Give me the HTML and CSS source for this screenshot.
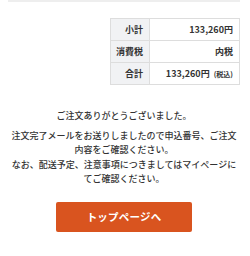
FILE: index.html
```html
<!DOCTYPE html>
<html lang="ja">
<head>
<meta charset="utf-8">
<link rel="stylesheet" href="styles.css">
</head>
<body>
<div class="wrap">
  <div class="bar"></div>
  <table class="totals">
    <colgroup><col class="c-label"><col class="c-value"></colgroup>
    <tr><th>小計</th><td>133,260円</td></tr>
    <tr><th>消費税</th><td>内税</td></tr>
    <tr><th>合計</th><td>133,260円 <span class="tax">(税込)</span></td></tr>
  </table>
  <div class="message">
    <p class="thanks">ご注文ありがとうございました。</p>
    <p class="note">注文完了メールをお送りしましたので申込番号、ご注文内容をご確認ください。<br>なお、配送予定、注意事項につきましてはマイページにてご確認ください。</p>
  </div>
  <div class="actions">
    <a class="btn" href="#">トップページへ</a>
  </div>
</div>
</body>
</html>
```
FILE: styles.css
```css
html, body {
  margin: 0;
  padding: 0;
  background: #fff;
}
body {
  font-family: "Noto Sans CJK JP", "Noto Sans", sans-serif;
  color: #333;
  font-size: 9px;
}
.wrap {
  margin: 0 10px 0 8px;
}
.bar {
  height: 2px;
  background: #eeeeee;
}
.totals {
  margin: 16px 0 0 auto;
  width: 129px;
  table-layout: fixed;
  border-collapse: collapse;
  font-size: 9px;
  font-weight: bold;
}
.c-label { width: 39px; }
.c-value { width: 90px; }
.totals th, .totals td {
  border: 1px solid #dddddd;
  height: 21px;
  padding: 0 6px 0 4px;
  text-align: right;
  line-height: 1;
  white-space: nowrap;
}
.totals th {
  background: #f1f2f4;
  font-weight: bold;
}
.totals .tax {
  font-size: 7px;
  margin-left: 2px;
}
.message {
  margin-top: 24px;
  text-align: center;
  line-height: 14.5px;
  font-weight: 500;
}
.message p {
  margin: 0;
}
.thanks {
  margin-bottom: 5px !important;
}
.actions {
  display: flex;
  justify-content: center;
  margin-top: 15px;
}
.btn {
  display: flex;
  align-items: center;
  justify-content: center;
  width: 136px;
  height: 30px;
  background: #d9541f;
  border-radius: 2px;
  color: #fff;
  font-weight: bold;
  font-size: 10.5px;
  text-decoration: none;
  letter-spacing: 0.2px;
}
```
